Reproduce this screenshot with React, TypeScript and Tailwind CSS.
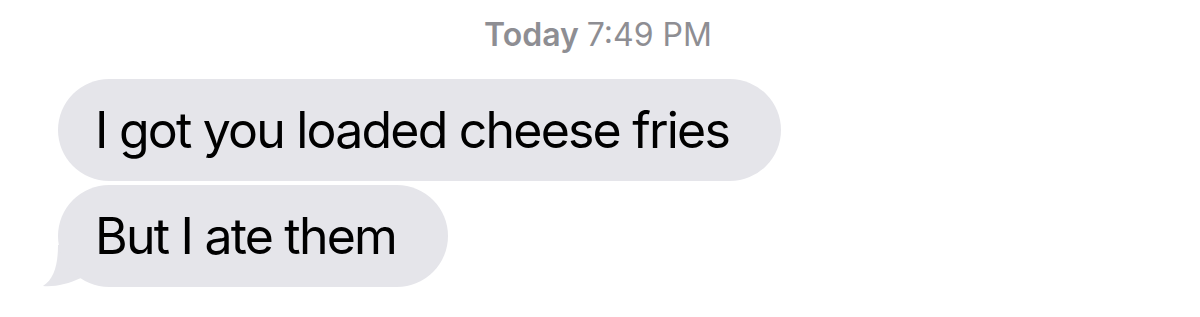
import React from "react";

const Bubble = ({ text, tail }: { text: string; tail?: boolean }) => {
  return (
    <div className="relative w-fit">
      {tail && (
        <svg
          className="absolute left-[-18px] bottom-0"
          width="44"
          height="42"
          viewBox="0 0 44 42"
        >
          <path d="M18 0 C18 20 14 34 3 41 C15 42 28 39 41 33 L41 0 Z" fill="#e5e5ea" />
        </svg>
      )}
      <div className="relative h-[102px] flex items-center rounded-[51px] bg-[#e5e5ea] pl-[37px] pr-[52px] text-[50px] leading-none text-black tracking-[-1.8px]">
        {text}
      </div>
    </div>
  );
};

export default function App() {
  return (
    <div
      className="w-[1200px] h-[317px] bg-white overflow-hidden"
      style={{ fontFamily: "Inter, 'Liberation Sans', sans-serif" }}
    >
      <div className="pt-[16px] flex justify-center pr-[4px] text-[32px] leading-[38px] text-[#8e8e93]">
        <span className="font-semibold">Today</span>
        <span className="ml-[8px]">7:49 PM</span>
      </div>
      <div className="mt-[25px] pl-[58px] flex flex-col gap-[4px]">
        <Bubble text="I got you loaded cheese fries" />
        <Bubble text="But I ate them" tail />
      </div>
    </div>
  );
}
